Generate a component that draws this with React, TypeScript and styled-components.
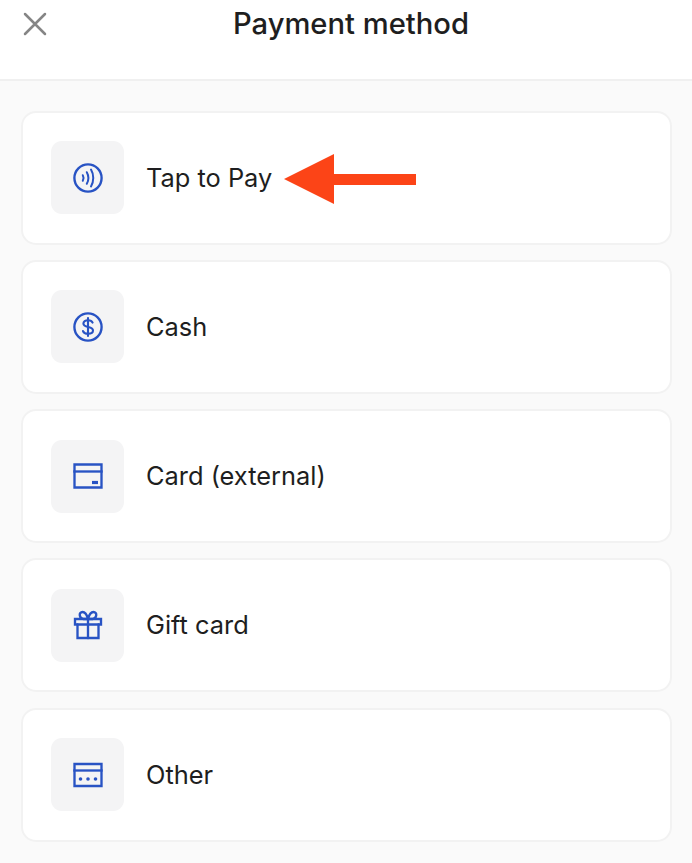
import React from "react";
import styled, { createGlobalStyle } from "styled-components";

const Global = createGlobalStyle`
  html, body { margin: 0; padding: 0; background: #fafafa; }
  body { font-family: Inter, "Liberation Sans", sans-serif; color: #1c1c1e; }
`;

const Page = styled.div`
  position: relative;
  width: 692px;
  height: 863px;
  overflow: hidden;
  background: #fafafa;
`;

const Header = styled.header`
  position: relative;
  box-sizing: border-box;
  height: 81px;
  padding: 5px 0 0 10px;
  background: #ffffff;
  border-bottom: 2px solid #f0f0f0;
  text-align: center;
`;

const Title = styled.h1`
  margin: 0;
  font-size: 29.2px;
  line-height: 38px;
  font-weight: 500;
  letter-spacing: 0;
  color: #1e1e20;
`;

const Close = styled.button`
  position: absolute;
  left: 23px;
  top: 12px;
  width: 24px;
  height: 24px;
  padding: 0;
  border: 0;
  background: none;
  display: flex;
`;

const List = styled.main`
  display: flex;
  flex-direction: column;
  gap: 15.25px;
  padding: 29.5px 20.5px 0;
`;

const Card = styled.div`
  box-sizing: border-box;
  height: 134px;
  display: flex;
  align-items: center;
  gap: 22px;
  padding-left: 28.5px;
  background: #ffffff;
  border: 2px solid #f2f2f2;
  border-radius: 15px;
`;

const Tile = styled.div`
  width: 73px;
  height: 73px;
  flex: none;
  border-radius: 11px;
  background: #f4f4f5;
  display: flex;
  align-items: center;
  justify-content: center;
  color: #2853c4;
`;

const Label = styled.span`
  font-size: 25.4px;
  line-height: 32px;
  font-weight: 400;
  color: #1e1e20;
`;

const Arrow = styled.svg`
  position: absolute;
  left: 284px;
  top: 154px;
`;

const Icon: React.FC<{ children: React.ReactNode }> = ({ children }) => (
  <svg width="32" height="32" viewBox="0 0 32 32" fill="none" stroke="currentColor" strokeWidth="2.35" strokeLinecap="round" strokeLinejoin="round">
    {children}
  </svg>
);

const TapIcon = () => (
  <Icon>
    <circle cx="16" cy="16" r="13.6" />
    <path d="M10.8 13.2c1 1.8 1 3.8 0 5.6" strokeWidth="2" />
    <path d="M14.8 10.2c2 3.6 2 8 0 11.6" strokeWidth="2" />
    <path d="M19 7.6c3 5 3 11.8 0 16.8" strokeWidth="2" />
  </Icon>
);

const CashIcon = () => (
  <Icon>
    <circle cx="16" cy="16" r="13.6" />
    <path d="M20.6 11.6c-.6-1.5-2.3-2.4-4.6-2.4-2.7 0-4.6 1.3-4.6 3.3 0 4.6 9.6 2.5 9.6 7 0 2-2 3.3-5 3.3-2.5 0-4.4-1-5-2.7" strokeWidth="2.1" />
    <path d="M16 7v18" strokeWidth="2.1" />
  </Icon>
);

const CardIcon = () => (
  <Icon>
    <path d="M2.5 4.5h27v23h-27z" strokeLinecap="square" strokeLinejoin="miter" />
    <path d="M2.5 11.5h27" strokeLinecap="square" />
    <path d="M20 22.5h6" strokeLinecap="butt" strokeWidth="3.2" />
  </Icon>
);

const GiftIcon = () => (
  <Icon>
    <path d="M3 10h26v5.5H3z" strokeLinejoin="miter" />
    <path d="M5.5 15.5V29h21V15.5" strokeLinejoin="miter" />
    <path d="M16 10v19" />
    <path d="M16 10c-1.2-4.6-3.2-7-5.4-7-2 0-3.2 1.6-2.8 3.6.4 2 1.8 3.4 3.6 3.4z" />
    <path d="M16 10c1.2-4.6 3.2-7 5.4-7 2 0 3.2 1.6 2.8 3.6-.4 2-1.8 3.4-3.6 3.4z" />
  </Icon>
);

const OtherIcon = () => (
  <Icon>
    <path d="M2.5 5h27v22h-27z" strokeLinecap="square" strokeLinejoin="miter" />
    <path d="M2.5 11.5h27" strokeLinecap="square" />
    <g fill="currentColor" stroke="none">
      <circle cx="8.5" cy="20" r="1.8" />
      <circle cx="16" cy="20" r="1.8" />
      <circle cx="23.5" cy="20" r="1.8" />
    </g>
  </Icon>
);

const methods = [
  { label: "Tap to Pay", icon: <TapIcon /> },
  { label: "Cash", icon: <CashIcon /> },
  { label: "Card (external)", icon: <CardIcon /> },
  { label: "Gift card", icon: <GiftIcon /> },
  { label: "Other", icon: <OtherIcon /> },
];

export default function App() {
  return (
    <Page>
      <Global />
      <Header>
        <Close aria-label="Close">
          <svg width="24" height="24" viewBox="0 0 24 24" fill="none" stroke="#858585" strokeWidth="2.5" strokeLinecap="round">
            <path d="M2 2l20 20M22 2L2 22" />
          </svg>
        </Close>
        <Title>Payment method</Title>
      </Header>
      <List>
        {methods.map((m) => (
          <Card key={m.label}>
            <Tile>{m.icon}</Tile>
            <Label>{m.label}</Label>
          </Card>
        ))}
      </List>
      <Arrow width="132" height="50" viewBox="0 0 132 50">
        <path d="M0 25L50 0V20H132V31H50V50z" fill="#fc4417" />
      </Arrow>
    </Page>
  );
}
